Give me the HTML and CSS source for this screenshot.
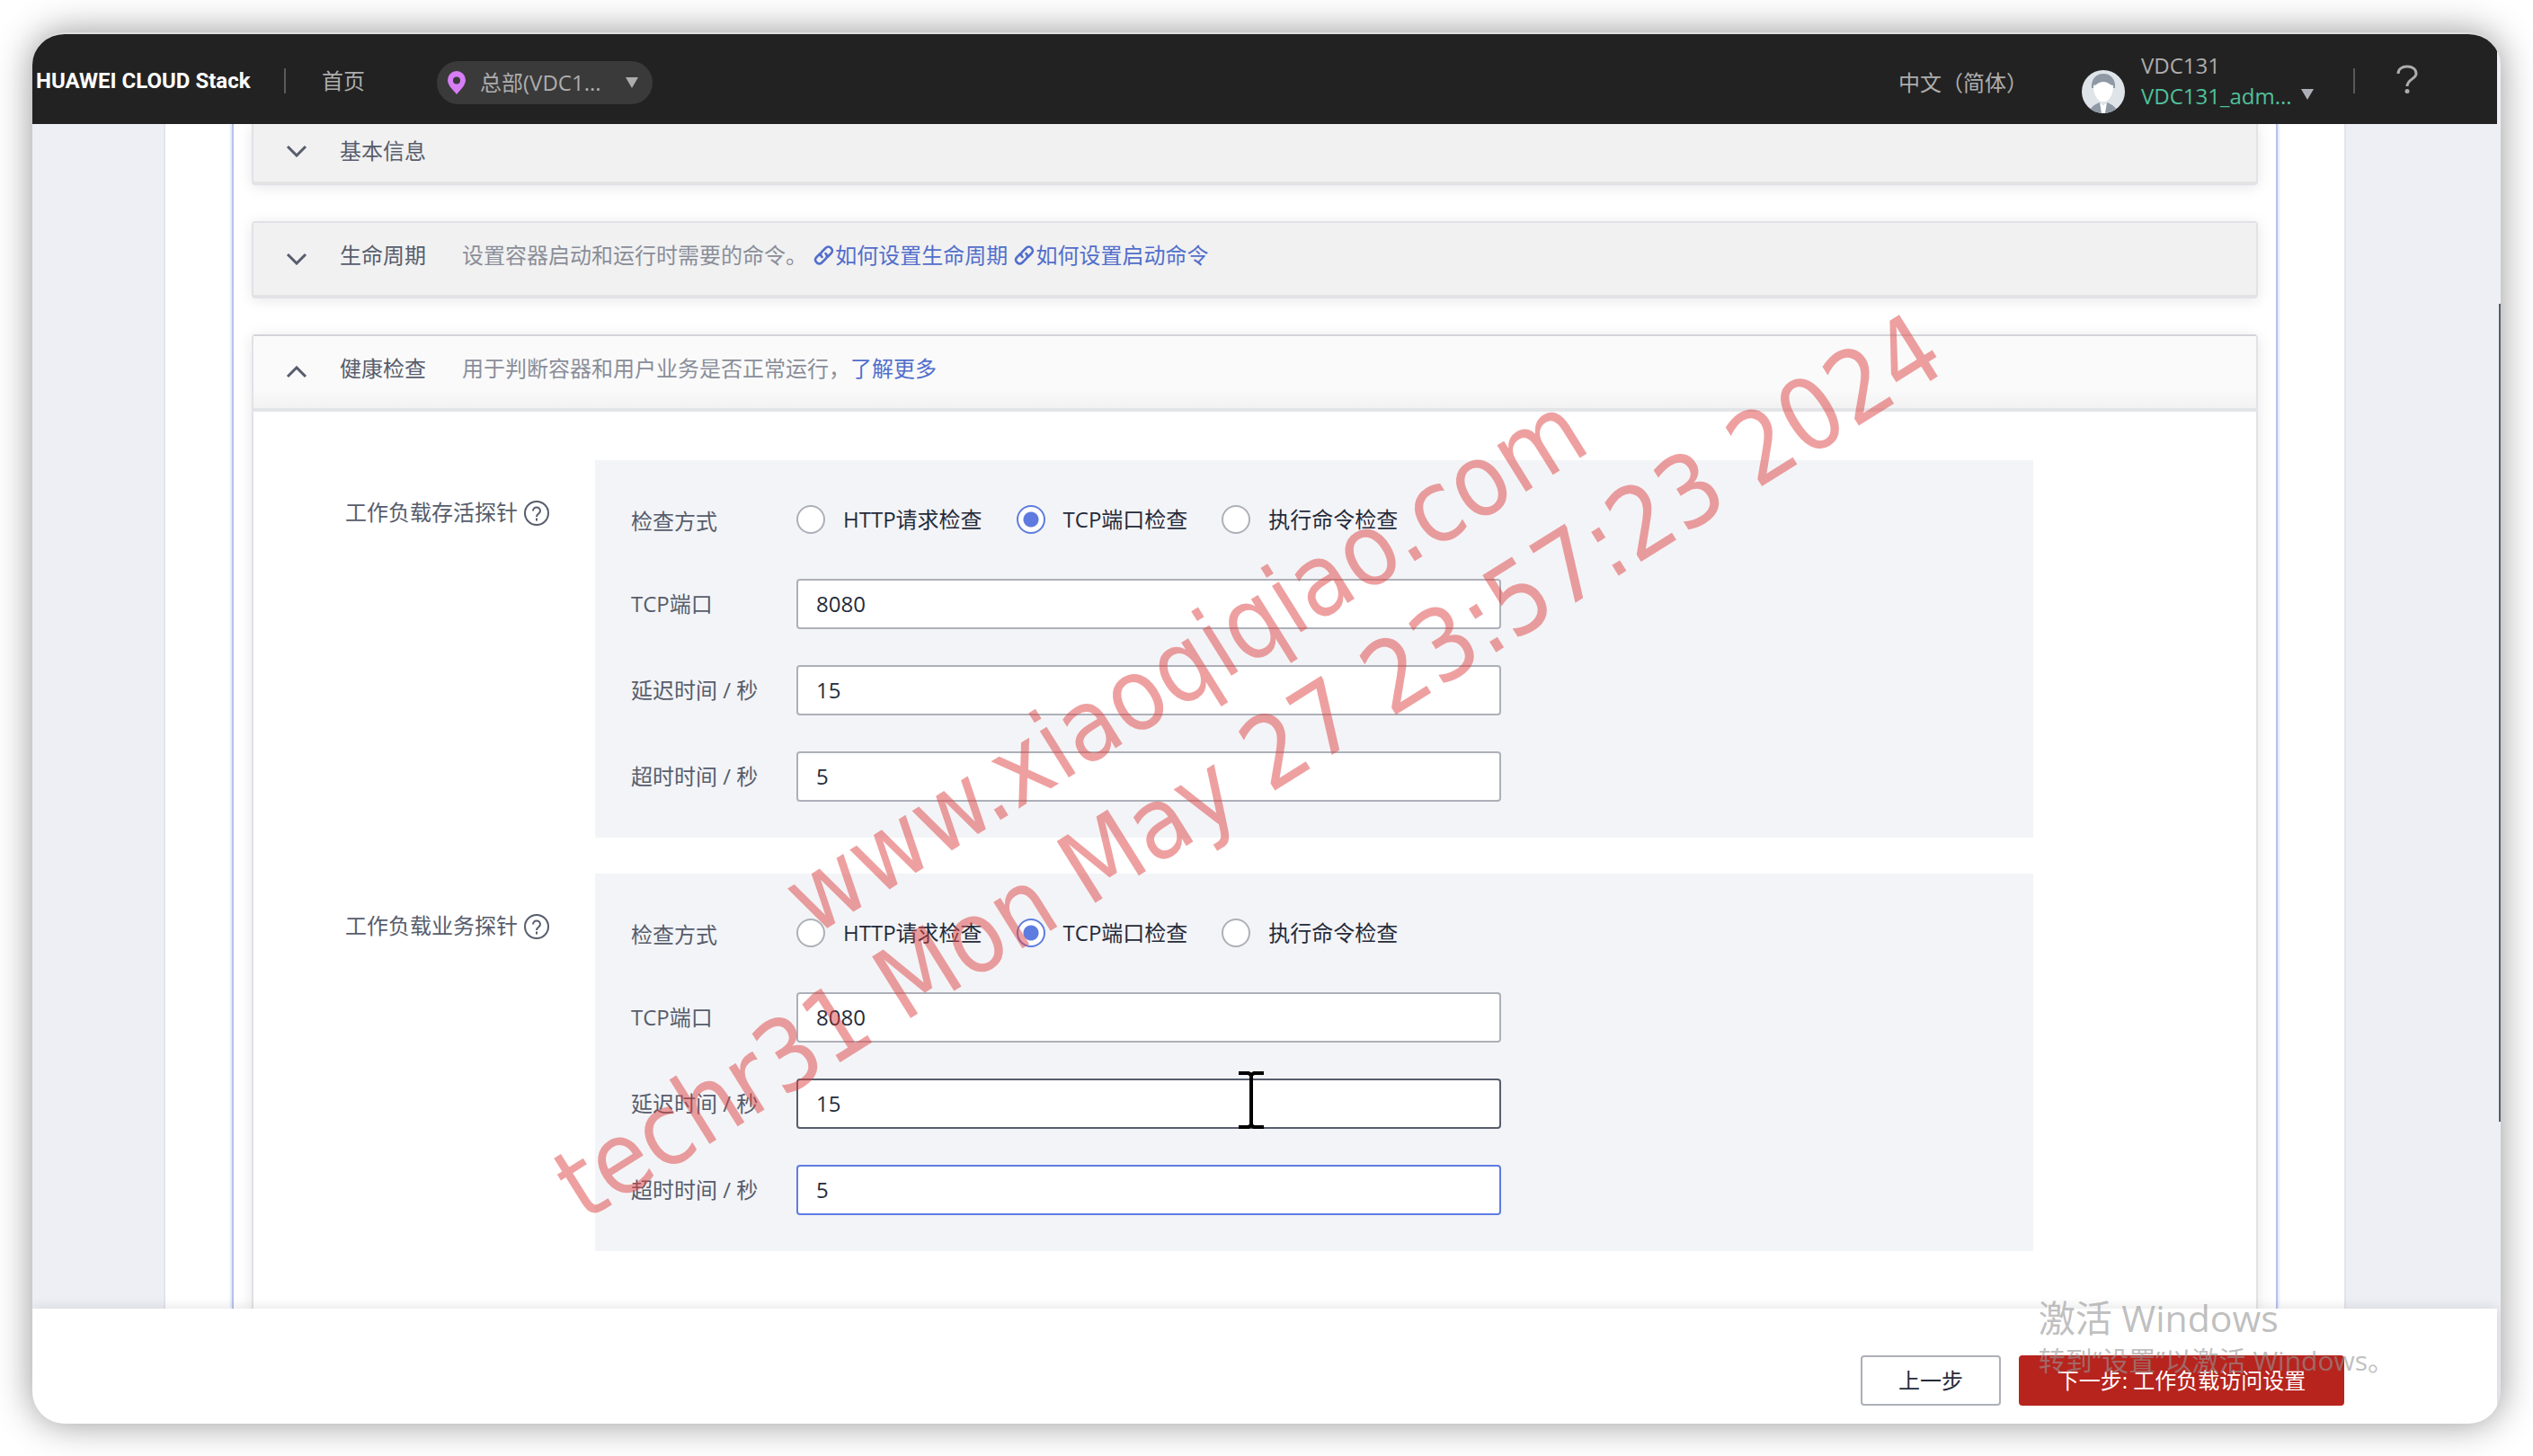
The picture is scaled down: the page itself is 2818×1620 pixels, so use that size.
FILE: index.html
```html
<!DOCTYPE html>
<html lang="zh-CN">
<head>
<meta charset="utf-8">
<title>HUAWEI CLOUD Stack</title>
<link rel="stylesheet" href="styles.css">
</head>
<body>
<div class="window">
  <div class="app">
    <header class="topbar">
      <span class="brand">HUAWEI CLOUD Stack</span>
      <span class="divider"></span>
      <a class="home" href="#">首页</a>
      <button class="region" type="button">
        <svg class="pin" viewBox="0 0 20 26" aria-hidden="true"><path fill="#d77df5" fill-rule="evenodd" d="M10 0a10 10 0 0 0-10 10c0 6 6 11 10 16 4-5 10-10 10-16A10 10 0 0 0 10 0Zm0 6.500a4 4 0 1 1 0 8 4 4 0 0 1 0-8Z"/></svg>
        <span class="region-name">总部(VDC1...</span>
        <svg class="caret" viewBox="0 0 14 12" aria-hidden="true"><path fill="currentColor" d="M0 0h14L7 12Z"/></svg>
      </button>
      <a class="language" href="#">中文（简体）</a>
      <svg class="avatar" viewBox="0 0 48 48" aria-hidden="true">
        <defs><clipPath id="face"><circle cx="24" cy="24" r="24"/></clipPath></defs>
        <g clip-path="url(#face)">
          <rect width="48" height="48" fill="#dfe4e9"/>
          <path fill="#8e99a5" d="M11 20C10 10 16 4 24 4s14 6 13 16Z"/>
          <path fill="#fff" d="M13 17c4 0 5-4 11-4s7 4 11 4c0 9-3 15-8 18h-6c-5-3-8-9-8-18Z"/>
          <path fill="#8e99a5" d="M8 48c1-6 6-10 12-12l4 3 4-3c6 2 11 6 12 12Z"/>
          <path fill="#fff" d="m20 36 4 3 4-3-2 12h-4Z"/>
        </g>
      </svg>
      <div class="user">
        <span>VDC131</span>
        <button class="account" type="button">VDC131_adm...
          <svg class="caret" viewBox="0 0 14 12" aria-hidden="true"><path fill="#adb0b8" d="M0 0h14L7 12Z"/></svg>
        </button>
      </div>
      <span class="divider"></span>
      <button class="help" type="button" aria-label="帮助">
        <svg viewBox="0 0 24 32" fill="none" aria-hidden="true"><path stroke="#adadad" stroke-width="3" d="M2 10C2 5 6 2 12 2s10 3 10 8c0 6-10 6-10 14"/><circle cx="12" cy="29.500" r="2.500" fill="#adadad"/></svg>
      </button>
    </header>

    <main class="content">
      <div class="sheet">
        <div class="panel">
          <section class="card card-first">
            <div class="card-head">
              <svg class="chevron" viewBox="0 0 24 14" aria-hidden="true"><path d="m2 2 10 10L22 2"/></svg>
              <h2>基本信息</h2>
            </div>
          </section>
          <section class="card">
            <div class="card-head">
              <svg class="chevron" viewBox="0 0 24 14" aria-hidden="true"><path d="m2 2 10 10L22 2"/></svg>
              <h2>生命周期</h2>
              <p>设置容器启动和运行时需要的命令。 <a href="#"><svg class="chain" viewBox="0 0 24 24" aria-hidden="true"><path d="M10 14c-2-2-2-4 0-6l4-4c2-2 4-2 6 0s2 4 0 6l-4 4M14 10c2 2 2 4 0 6l-4 4c-2 2-4 2-6 0s-2-4 0-6l4-4"/></svg>如何设置生命周期</a> <a href="#"><svg class="chain" viewBox="0 0 24 24" aria-hidden="true"><path d="M10 14c-2-2-2-4 0-6l4-4c2-2 4-2 6 0s2 4 0 6l-4 4M14 10c2 2 2 4 0 6l-4 4c-2 2-4 2-6 0s-2-4 0-6l4-4"/></svg>如何设置启动命令</a></p>
            </div>
          </section>
          <section class="card card-open">
            <div class="card-head">
              <svg class="chevron" viewBox="0 0 24 14" aria-hidden="true"><path d="M2 12 12 2l10 10"/></svg>
              <h2>健康检查</h2>
              <p>用于判断容器和用户业务是否正常运行，<a href="#">了解更多</a></p>
            </div>
            <form class="probes" id="probes">
              <div class="probe">
                <div class="probe-name">工作负载存活探针
                  <svg class="hint" viewBox="0 0 30 30" fill="none" aria-hidden="true"><circle cx="15" cy="15" r="13"/><path d="M11 12.500c0-5.500 8-5.500 8 0 0 3-4 3-4 6.500M15 20.500v3"/></svg>
                </div>
                <div class="probe-box">
                  <div class="row row-radio" role="radiogroup" aria-labelledby="live-mode">
                    <span class="row-label" id="live-mode">检查方式</span>
                    <div class="options">
                      <label><input type="radio" name="live">HTTP请求检查</label>
                      <label><input type="radio" name="live" checked>TCP端口检查</label>
                      <label><input type="radio" name="live">执行命令检查</label>
                    </div>
                  </div>
                  <div class="row"><label class="row-label" for="live-port">TCP端口</label><input class="field" id="live-port" type="text" value="8080"></div>
                  <div class="row"><label class="row-label" for="live-delay">延迟时间 / 秒</label><input class="field" id="live-delay" type="text" value="15"></div>
                  <div class="row"><label class="row-label" for="live-timeout">超时时间 / 秒</label><input class="field" id="live-timeout" type="text" value="5"></div>
                </div>
              </div>
              <div class="probe">
                <div class="probe-name">工作负载业务探针
                  <svg class="hint" viewBox="0 0 30 30" fill="none" aria-hidden="true"><circle cx="15" cy="15" r="13"/><path d="M11 12.500c0-5.500 8-5.500 8 0 0 3-4 3-4 6.500M15 20.500v3"/></svg>
                </div>
                <div class="probe-box">
                  <div class="row row-radio" role="radiogroup" aria-labelledby="ready-mode">
                    <span class="row-label" id="ready-mode">检查方式</span>
                    <div class="options">
                      <label><input type="radio" name="ready">HTTP请求检查</label>
                      <label><input type="radio" name="ready" checked>TCP端口检查</label>
                      <label><input type="radio" name="ready">执行命令检查</label>
                    </div>
                  </div>
                  <div class="row"><label class="row-label" for="ready-port">TCP端口</label><input class="field" id="ready-port" type="text" value="8080"></div>
                  <div class="row"><label class="row-label" for="ready-delay">延迟时间 / 秒</label><div class="field-wrap"><input class="field is-hover" id="ready-delay" type="text" value="15"><svg class="ibeam" viewBox="0 0 28 64" aria-hidden="true"><path d="M0 2h11l3 2 3-2h11M14 3v58M0 62h11l3-2 3 2h11"/></svg></div></div>
                  <div class="row"><label class="row-label" for="ready-timeout">超时时间 / 秒</label><input class="field is-focus" id="ready-timeout" type="text" value="5"></div>
                </div>
              </div>
            </form>
          </section>
        </div>
      </div>
    </main>

    <footer class="actions">
      <button class="btn" type="button">上一步</button>
      <button class="btn btn-primary" type="submit" form="probes">下一步: 工作负载访问设置</button>
    </footer>
  </div>
  <div class="scroll"><div class="thumb"></div></div>

  <div class="stamp">www.xiaoqiqiao.com<br>techr31 Mon May 27 23:57:23 2024</div>
  <div class="activate"><p class="activate-title">激活 Windows</p><p class="activate-text">转到“设置”以激活 Windows。</p></div>
</div>
</body>
</html>
```
FILE: styles.css
```css
* { box-sizing: border-box; }

body {
  margin: 0;
  padding: 36px;
  background: #fff;
  color: #252b3a;
  font: 24px/36px "Open Sans", "Noto Sans CJK SC", sans-serif;
}

h2, p { margin: 0; font-size: inherit; font-weight: 400; }
a { color: #526ecc; text-decoration: none; }
svg { display: block; flex: none; }
button { padding: 0; border: 0; background: none; color: inherit; font: inherit; }

.window {
  position: relative;
  display: flex;
  height: calc(100vh - 72px);
  border-top: 2px solid #ddd;
  border-radius: 36px;
  background: #eeeff5;
  box-shadow: 0 0 40px rgba(0, 0, 0, .42);
  overflow: hidden;
}

.app { flex: 1; min-width: 0; display: flex; flex-direction: column; }

/* Top bar */
.topbar {
  position: relative;
  z-index: 2;
  display: flex;
  align-items: center;
  height: 100px;
  padding: 4px 88px 0 4px;
  background: #222;
  color: #adadad;
}
.brand {
  width: 238px;
  color: #fff;
  font: 700 24px/36px Roboto, "Noto Sans", sans-serif;
  white-space: nowrap;
}
.divider { width: 2px; height: 28px; background: #5a5a5a; }
.brand + .divider { margin: 0 40px 0 38px; }
.home, .language { color: inherit; }
.region {
  display: flex;
  align-items: center;
  width: 240px;
  height: 48px;
  margin: 4px 0 0 80px;
  padding: 0 16px 0 12px;
  border-radius: 24px;
  background: #3a3a3a;
}
.pin { width: 20px; height: 26px; margin-right: 16px; }
.caret { width: 14px; height: 12px; }
.region .caret { margin-left: auto; }
.language { margin-left: auto; padding-top: 4px; }
.avatar { width: 48px; height: 48px; margin: 24px 18px 0 60px; }
.user { display: flex; flex-direction: column; width: 192px; margin-right: 44px; line-height: 34px; }
.account { display: flex; align-items: center; justify-content: space-between; color: #50c09a; line-height: 34px; }
.account .caret { margin-bottom: 4px; }
.help { margin-left: 46px; }
.help svg { width: 24px; height: 32px; margin-bottom: 4px; }

/* Scrolled page */
.content { flex: 1; min-height: 0; display: flex; padding: 0 168px 0 146px; overflow: hidden; }
.sheet {
  flex: 1;
  display: flex;
  padding: 0 74px;
  border: solid #e3e4ea;
  border-width: 0 2px;
  background: #fff;
}
.panel {
  flex: 1;
  display: flex;
  flex-direction: column;
  gap: 40px;
  padding: 0 20px;
  border: solid #b8c2ea;
  border-width: 0 2px;
  box-shadow: 0 0 4px #b8c6f5;
}
.card {
  border: 2px solid #e1e2e7;
  border-radius: 4px;
  box-shadow: 0 2px 16px rgba(0, 0, 0, .1);
}
.card-head {
  display: flex;
  align-items: center;
  height: 82px;
  padding: 0 36px;
  border-bottom: 2px solid #e4e4e4;
  background: #f1f1f1;
  color: #575d6c;
}
.card-head h2 { width: 136px; margin-left: 36px; padding-bottom: 8px; }
.card-head p { padding-bottom: 8px; color: #8a8e99; }
.card-first { border-top: 0; border-radius: 0 0 4px 4px; }
.card-first .card-head { height: 66px; padding-bottom: 4px; }
.card-first h2 { padding-bottom: 0; }
.card-open { flex: 1; border-top-color: #d3d4d9; }
.card-open .card-head { height: 84px; border-bottom: 4px solid #e3e4e7; background: linear-gradient(#fafafa 75%, #f2f2f2); }
.chevron { width: 24px; height: 14px; fill: none; stroke: #575d6c; stroke-width: 3; }
.chain {
  display: inline-block;
  width: 25px;
  height: 24px;
  vertical-align: -3px;
  fill: none;
  stroke: #526ecc;
  stroke-width: 2.5;
  stroke-linecap: round;
}

/* Probe forms */
.probes { display: flex; flex-direction: column; gap: 40px; padding: 54px 248px 64px 102px; background: #fff; }
.probe { display: flex; }
.probe-name { display: flex; gap: 6px; width: 278px; padding-top: 40px; color: #575d6c; }
.hint { width: 30px; height: 30px; margin-top: 4px; stroke: #575d6c; stroke-width: 2; }
.probe-box { flex: 1; display: flex; flex-direction: column; gap: 40px; padding: 40px; background: #f3f4f7; }
.row { display: flex; align-items: center; height: 56px; }
.row-radio { height: 52px; }
.row-label { width: 184px; color: #575d6c; }
.row-radio .row-label { padding-top: 4px; }
.options { display: flex; gap: 38px; }
.options label { display: flex; align-items: center; gap: 20px; }
.options input {
  appearance: none;
  width: 32px;
  height: 32px;
  margin: 0;
  border: 2px solid #adb0b8;
  border-radius: 50%;
  background: #fff;
}
.options input:checked { border-color: #5e7ce0; background: radial-gradient(circle, #5e7ce0 8px, #fff 9px); }
.field {
  display: block;
  width: 784px;
  height: 56px;
  padding: 0 20px 2px;
  border: 2px solid #adb0b8;
  border-radius: 4px;
  background: #fff;
  color: #252b3a;
  font: inherit;
}
.is-hover { border-color: #575d6c; }
.is-focus { border-color: #5e7ce0; }
.field-wrap { position: relative; }
.ibeam { position: absolute; top: -8px; left: 492px; width: 28px; height: 64px; fill: none; stroke: #000; stroke-width: 4; }

/* Footer */
.actions {
  position: relative;
  z-index: 1;
  display: flex;
  justify-content: flex-end;
  gap: 20px;
  height: 128px;
  padding: 52px 170px 0 0;
  background: #fff;
  box-shadow: 0 0 14px rgba(0, 0, 0, .12);
}
.btn { width: 156px; height: 56px; border: 2px solid #adb0b8; border-radius: 4px; background: #fff; color: #252b3a; }
.btn-primary { width: 362px; border-color: #b7241e; background: #b7241e; color: #fff; }

/* Scroll indicator */
.scroll { display: flex; flex-direction: column; align-items: flex-end; width: 4px; padding-top: 300px; }
.thumb { width: 2px; height: 73%; background: #575d6c; }

/* Overlaid marks */
.stamp {
  position: absolute;
  z-index: 3;
  top: 49%;
  left: 48%;
  color: rgba(221, 65, 65, .5);
  font: 111px/134px "DejaVu Sans Condensed", "Noto Sans", sans-serif;
  text-align: center;
  white-space: nowrap;
  transform: translate(-50%, -50%) rotate(-32deg);
  pointer-events: none;
}
.activate {
  position: absolute;
  z-index: 3;
  right: 118px;
  bottom: 48px;
  color: rgba(150, 150, 150, .62);
  white-space: nowrap;
  pointer-events: none;
}
.activate-title { font-size: 41px; line-height: 52px; }
.activate-text { font-size: 30px; line-height: 44px; }
```
